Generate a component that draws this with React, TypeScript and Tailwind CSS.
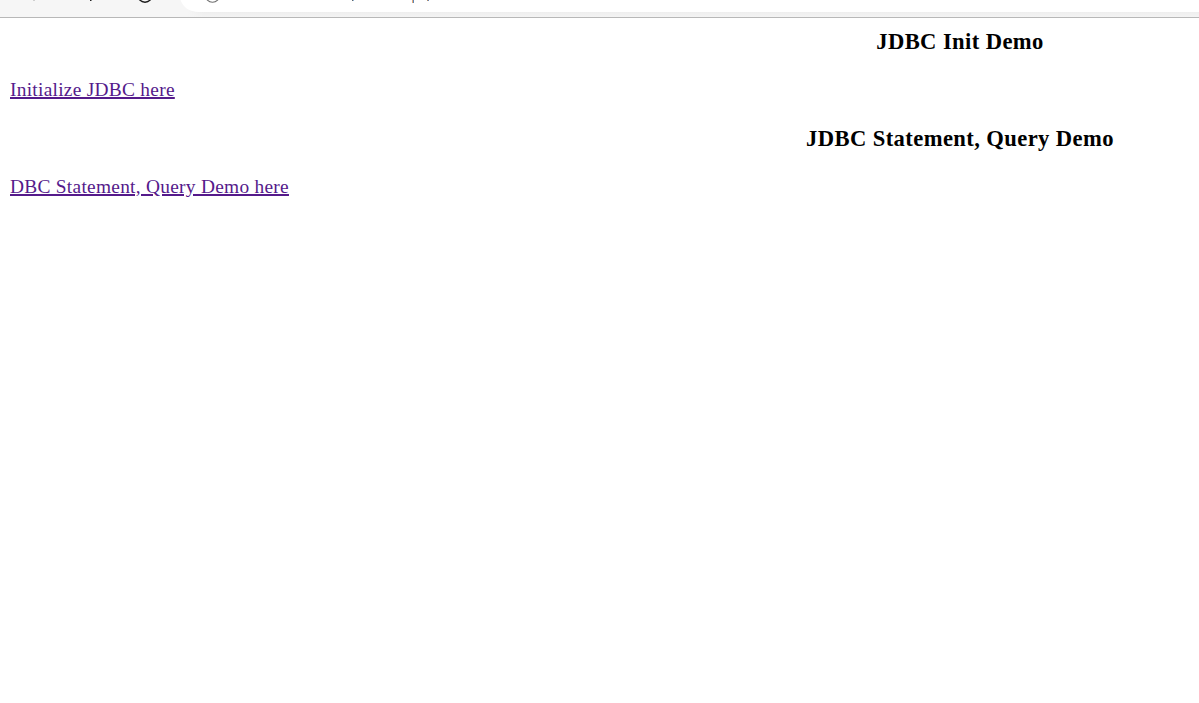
function BrowserBar() {
  return (
    <header className="h-[18px] border-b border-[#b8b8b8] bg-[#f6f6f6]">
      <svg width="1199" height="17" viewBox="0 0 1199 17" className="block">
        <defs>
          <linearGradient id="shade" x1="0" y1="0" x2="0" y2="1">
            <stop offset="0" stopColor="#ededed" />
            <stop offset="1" stopColor="#f4f4f4" />
          </linearGradient>
          <linearGradient id="fade" x1="0" y1="0" x2="1" y2="0">
            <stop offset="0" stopColor="#f6f6f6" />
            <stop offset="1" stopColor="#f6f6f6" stopOpacity="0" />
          </linearGradient>
        </defs>
        <rect x="188" y="11" width="1011" height="6" fill="url(#shade)" />
        <rect x="188" y="11" width="16" height="6" fill="url(#fade)" />
        <path d="M180.500 0C183 7 189 12 199 12H1199V0Z" fill="#fff" />
        <rect x="33" width="2" height="1" fill="#cfcfcf" />
        <path d="M90 0H92L91 1H90Z" fill="#222" />
        <circle cx="145" cy="-5" r="7.2" fill="none" stroke="#1b1b1b" strokeWidth="1.5" />
        <circle cx="212.500" cy="-5" r="7.2" fill="none" stroke="#707070" strokeWidth="1.1" />
        <rect x="352" width="1" height="1" fill="#666" />
        <rect x="353" width="1" height="1" fill="#8fb4d6" />
        <rect x="412" width="1" height="3" fill="#e3a878" />
        <rect x="413" width="1" height="3" fill="#5c86b5" />
        <rect x="427" width="1" height="1" fill="#b99064" />
        <rect x="428" width="1" height="1" fill="#6184bd" />
      </svg>
    </header>
  );
}

function Demo({ title, link }: { title: string; link: string }) {
  return (
    <section className="mb-[23px] h-[74px]">
      <h3 className="mb-[23px] text-center text-[22.6px] leading-[27px] font-bold tracking-[0.4px]">
        {title}
      </h3>
      <a
        href="#"
        className="block w-fit text-[19.4px] leading-[24px] tracking-[0.27px] text-[#551a8b] underline decoration-2 underline-offset-1"
      >
        {link}
      </a>
    </section>
  );
}

export default function App() {
  return (
    <div className="h-[703px] w-[1199px] overflow-hidden bg-white font-['Liberation_Serif',serif] text-black">
      <BrowserBar />
      <main className="w-[1920px] px-[10px] pt-[10px]">
        <Demo title="JDBC Init Demo" link="Initialize JDBC here" />
        <Demo title="JDBC Statement, Query Demo" link="DBC Statement, Query Demo here" />
      </main>
    </div>
  );
}
